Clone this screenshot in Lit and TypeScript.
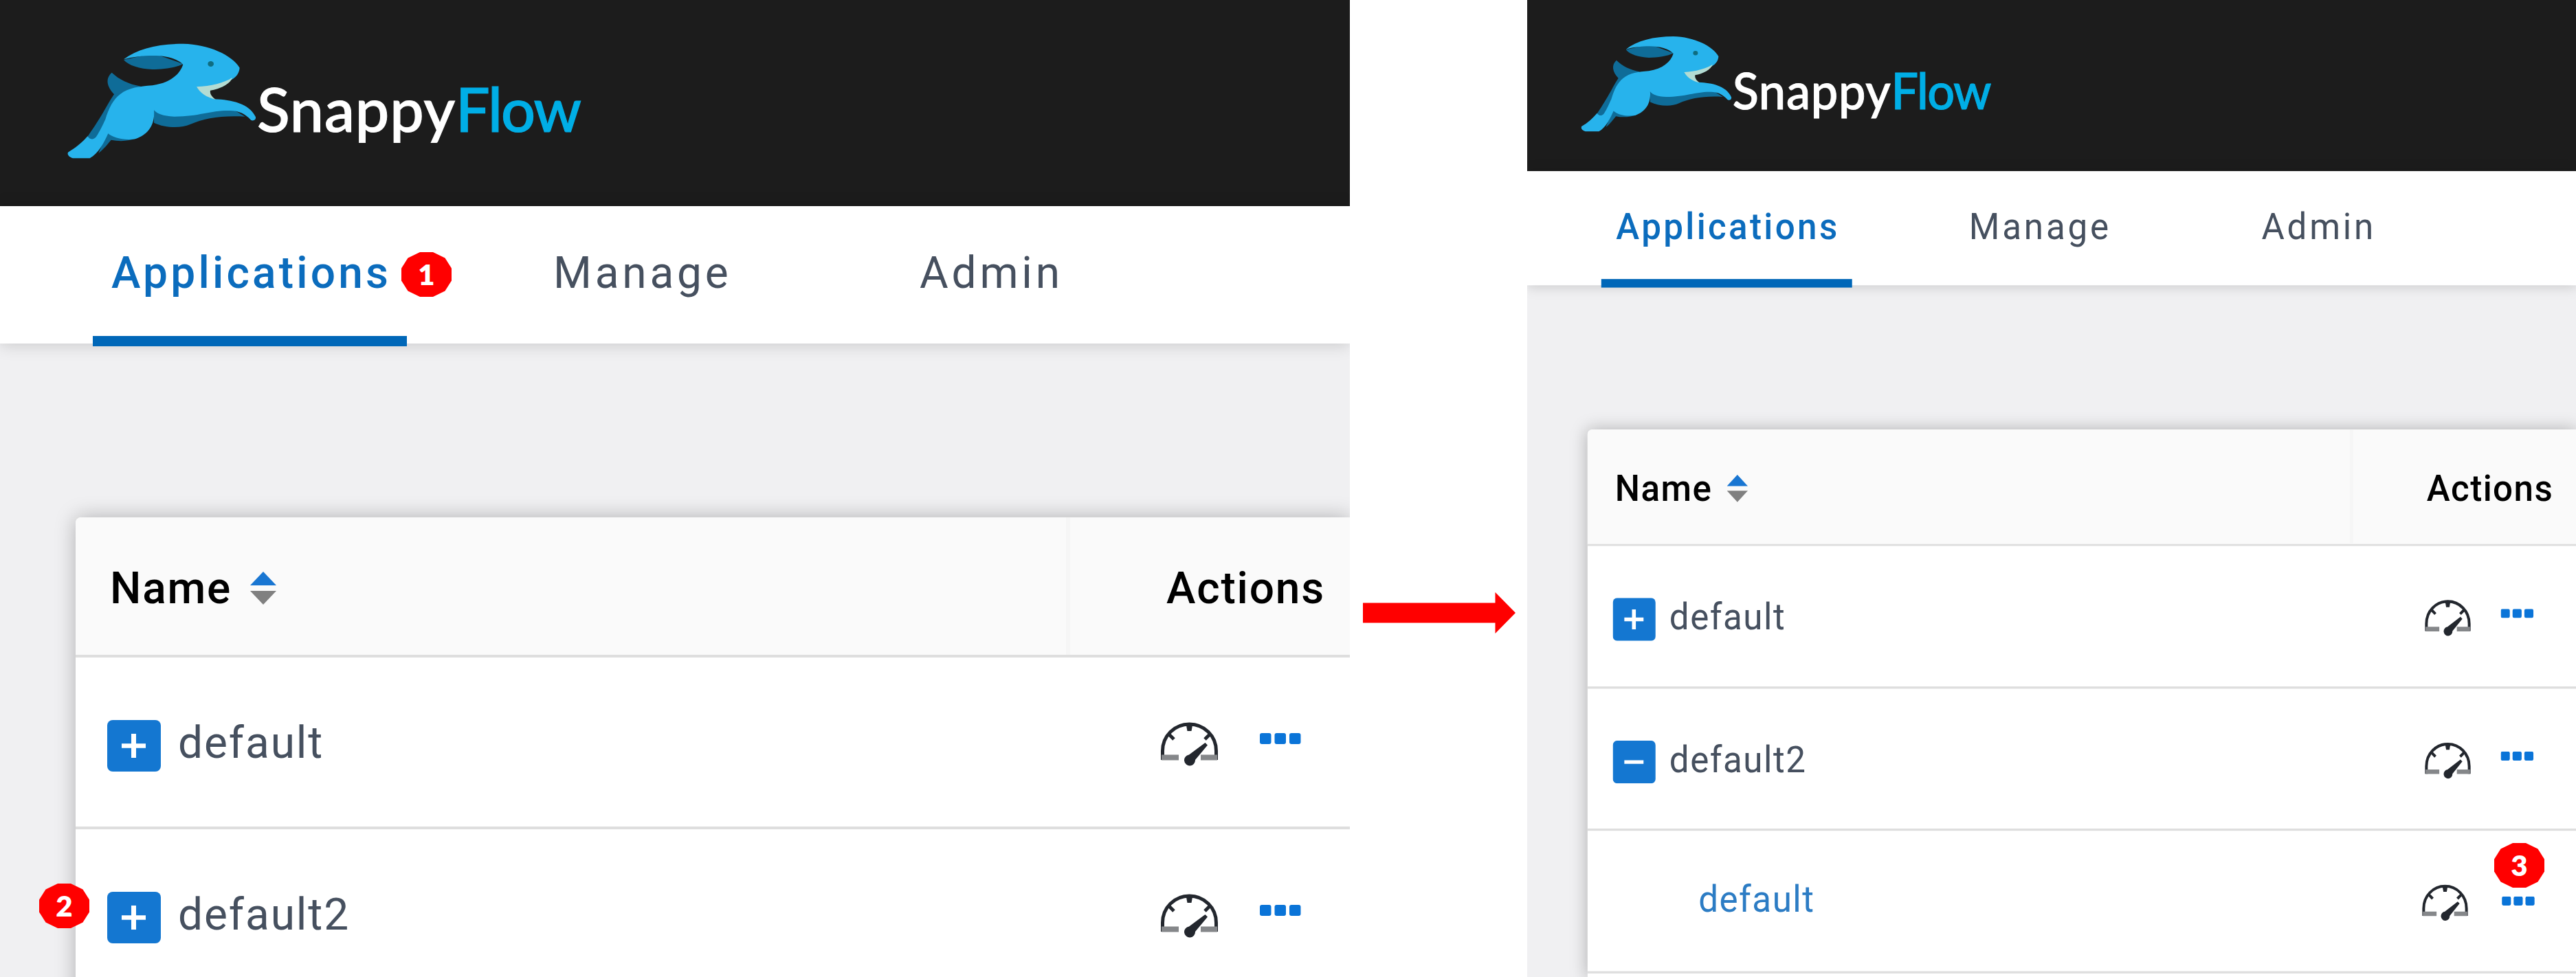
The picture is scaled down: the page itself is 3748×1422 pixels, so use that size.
import { LitElement, html, css, svg, nothing } from "lit";
import { customElement, property } from "lit/decorators.js";
import { classMap } from "lit/directives/class-map.js";

interface AppRow {
  name: string;
  state: "closed" | "open" | "child";
}

@customElement("brand-logo")
class BrandLogo extends LitElement {
  static styles = css`
    :host {
      display: flex;
      align-items: flex-start;
      font-family: Lato, "Liberation Sans", sans-serif;
    }
    .rabbit {
      display: block;
      width: 276px;
      height: 170px;
      margin: 62px 0 0 98px;
    }
    .word {
      margin: 103px 0 0 0;
      font-size: 88px;
      line-height: 110px;
      font-weight: 500;
      color: #fff;
      letter-spacing: 0.9px;
      white-space: nowrap;
      -webkit-text-stroke: 1.2px currentColor;
    }
    .flow {
      color: #00aee6;
      letter-spacing: -2px;
    }
  `;

  render() {
    return html`
      <svg class="rabbit" viewBox="24 35 828 510" preserveAspectRatio="none">
        <g fill="#0f6c98">
          <path d="M218 166C190 190 194 226 230 262L264 268L345 226C290 216 250 196 218 166Z" />
          <path d="M230 258C200 300 180 350 112 446L130 468L160 460L220 380L275 256Z" />
          <path d="M402 328V385C450 408 520 410 560 392C620 365 700 352 800 358L740 322L500 340Z" />
          <path d="M198 426L160 518C185 498 200 478 215 460C250 467 290 467 335 450Z" />
          <path d="M270 110L400 82L529 128C500 144 440 152 395 152C340 150 290 135 270 110Z" />
        </g>
        <path
          fill="#27b3ec"
          d="M270 108C330 62 420 40 530 40C640 42 745 90 776 145C774 168 762 184 742 196C700 222 640 228 590 230C605 250 635 268 668 282C740 285 818 300 846 360C848 372 838 378 826 374C800 345 770 332 735 332C650 330 600 358 490 358C440 356 415 345 402 330C408 400 370 440 320 456C270 462 225 452 202 432C185 470 160 520 122 540H48C32 535 22 525 27 514C60 495 90 470 112 444C124 462 140 458 150 446C168 418 178 395 190 370C205 320 225 282 255 260C290 232 340 226 395 222C470 212 515 175 529 131C505 105 455 92 400 92C350 92 305 98 270 108Z"
        />
        <path fill="#b3dcd3" d="M588 228C650 226 710 210 744 188C736 215 690 238 648 244C645 258 655 272 672 284C630 274 604 255 588 228Z" />
        <ellipse cx="650" cy="128" rx="13" ry="12" fill="#0f6d80" />
      </svg>
      <div class="word">Snappy<span class="flow">Flow</span></div>
    `;
  }
}

@customElement("app-panel")
class AppPanel extends LitElement {
  @property({ attribute: false }) rows: AppRow[] = [];
  @property({ type: Boolean, reflect: true }) compact = false;

  static styles = css`
    :host {
      display: block;
      width: 1964px;
      height: 1422px;
      overflow: hidden;
      --name-col: 1444px;
      --action-pad: 134px;
      font-family: Roboto, "Liberation Sans", sans-serif;
      font-size: 64px;
      line-height: 80px;
      color: #46505f;
    }
    :host([compact]) {
      width: 1526px;
      --name-col: 1392px;
      --action-pad: 128px;
    }
    .page {
      display: flex;
      flex-direction: column;
      width: 1964px;
      height: 1713px;
      background: #f0f0f2;
      overflow: hidden;
    }
    :host([compact]) .page {
      width: 1912px;
      transform: scale(0.7985, 0.8305);
      transform-origin: 0 0;
    }
    .top {
      flex: none;
      height: 300px;
      background: #1c1c1c;
    }
    .tabs {
      flex: none;
      display: flex;
      height: 200px;
      padding-left: 135px;
      background: #fff;
      box-shadow: 0 2px 22px rgba(0, 0, 0, 0.17);
    }
    .tab {
      box-sizing: border-box;
      height: 204px;
      padding-top: 58px;
      letter-spacing: 4.8px;
      white-space: nowrap;
    }
    .tab.first {
      width: 457px;
      margin-right: 213px;
      padding-left: 27px;
      border-bottom: 15px solid #0067b8;
      color: #0b6cbd;
      font-weight: 500;
      letter-spacing: 4.2px;
    }
    .tab.second {
      width: 533px;
    }
    .table {
      flex: 1;
      margin: 253px 0 0 110px;
      background: #fff;
      border-radius: 8px 0 0 0;
      box-shadow: 0 0 30px rgba(0, 0, 0, 0.27);
    }
    .head,
    .row {
      box-sizing: border-box;
      display: grid;
      grid-template-columns: var(--name-col) 1fr;
      border-bottom: 4px solid #dedede;
    }
    .head {
      height: 204px;
      background: #fafafa;
      border-radius: 8px 0 0 0;
      color: #000;
      font-weight: 500;
      letter-spacing: 1.8px;
    }
    .head .name {
      display: flex;
      padding: 64px 0 0 50px;
    }
    .sort {
      width: 38px;
      height: 50px;
      margin: 15px 0 0 27px;
    }
    .head .actions {
      padding-top: 64px;
      border-left: 6px solid #f6f6f6;
      margin-left: -3px;
      padding-left: calc(var(--action-pad) + 6px);
    }
    .row {
      height: 249.5px;
    }
    .row .name {
      display: flex;
      padding-left: 46px;
      letter-spacing: 1.9px;
    }
    .toggle {
      width: 78px;
      height: 75px;
      margin: 91px 25px 0 0;
    }
    .label {
      margin-top: 85px;
    }
    .child .label {
      margin: 81px 0 0 156px;
      color: #2c7cc4;
    }
    .row .actions {
      display: flex;
      padding-left: var(--action-pad);
    }
    .gauge {
      width: 85px;
      height: 64px;
      margin-top: 94px;
    }
    .more {
      width: 60px;
      height: 16px;
      margin: 110px 0 0 60px;
    }
    :host([compact]) .gauge {
      margin-left: 5px;
    }
    :host([compact]) .more {
      margin-left: 54px;
    }
    :host([compact]) .child .gauge {
      margin-left: 0;
    }
    :host([compact]) .child .more {
      margin: 115px 0 0 61px;
    }
  `;

  private toggle(open: boolean) {
    return html`<svg class="toggle" viewBox="0 0 78 75">
      <rect width="78" height="75" rx="8" fill="#1477d1" />
      <path d="M21 37.5H56" stroke="#fff" stroke-width="6.500" />
      ${open ? nothing : svg`<path d="M38.500 20V55" stroke="#fff" stroke-width="7" />`}
    </svg>`;
  }

  private renderRow(row: AppRow) {
    return html`<div class=${classMap({ row: true, child: row.state === "child" })}>
      <div class="name">
        ${row.state === "child" ? nothing : this.toggle(row.state === "open")}
        <span class="label">${row.name}</span>
      </div>
      <div class="actions">
        <svg class="gauge" viewBox="0 0 85 64" fill="none" stroke="#23272e">
          <path d="M3.500 55V42C3.500 20 21 3 42.500 3S81.500 20 81.500 42V55" stroke-width="5" />
          <path d="M2 51.500H27M59 51.500H83" stroke="#85878a" stroke-width="8" />
          <path d="M12 17L20 25M73 17L65 25" stroke-width="5" />
          <path d="M37.500 2H47.500L45.500 13H39.500Z" fill="#23272e" stroke="none" />
          <path d="M65.500 30L69 33.500L51 55A8 8 0 1 1 42 47.500Z" fill="#23272e" stroke="none" />
        </svg>
        <svg class="more" viewBox="0 0 60 16" fill="#0a74d8">
          <rect x="0" width="16.500" height="16" rx="3" />
          <rect x="21.500" width="16.500" height="16" rx="3" />
          <rect x="43" width="16.500" height="16" rx="3" />
        </svg>
      </div>
    </div>`;
  }

  render() {
    return html`<div class="page">
      <div class="top"><brand-logo></brand-logo></div>
      <div class="tabs">
        <div class="tab first">Applications</div>
        <div class="tab second">Manage</div>
        <div class="tab">Admin</div>
      </div>
      <div class="table">
        <div class="head">
          <div class="name">
            <span>Name</span>
            <svg class="sort" viewBox="0 0 38 50">
              <path d="M19 0L38 20H0Z" fill="#1976d2" />
              <path d="M0 28H38L19 48Z" fill="#808080" />
            </svg>
          </div>
          <div class="actions">Actions</div>
        </div>
        ${this.rows.map((r) => this.renderRow(r))}
      </div>
    </div>`;
  }
}

@customElement("app-root")
class AppRoot extends LitElement {
  static styles = css`
    :host {
      display: flex;
      position: relative;
      width: 3748px;
      height: 1422px;
      overflow: hidden;
      background: #fff;
    }
    .between {
      display: flex;
      align-items: flex-start;
      width: 258px;
    }
    .arrow {
      width: 222px;
      height: 60px;
      margin: 862px 0 0 19px;
    }
    .badge {
      position: absolute;
      display: flex;
      align-items: center;
      justify-content: center;
      width: 73px;
      height: 65px;
      background: #f00;
      clip-path: polygon(37% 0, 63% 0, 87% 13%, 100% 36%, 100% 64%, 87% 87%, 63% 100%, 37% 100%, 13% 87%, 0 64%, 0 36%, 13% 13%);
      color: #fff;
      font: 800 42px/65px Lato, "Liberation Sans", sans-serif;
    }
    .one {
      left: 584px;
      top: 367px;
    }
    .two {
      left: 57px;
      top: 1286px;
    }
    .three {
      left: 3629px;
      top: 1227px;
    }
  `;

  private before: AppRow[] = [
    { name: "default", state: "closed" },
    { name: "default2", state: "closed" },
  ];

  private after: AppRow[] = [
    { name: "default", state: "closed" },
    { name: "default2", state: "open" },
    { name: "default", state: "child" },
  ];

  render() {
    return html`
      <app-panel .rows=${this.before}></app-panel>
      <div class="between">
        <svg class="arrow" viewBox="0 0 222 60">
          <path d="M0 15.500H192.500V0L222 30L192.500 60V44.500H0Z" fill="#f00" />
        </svg>
      </div>
      <app-panel compact .rows=${this.after}></app-panel>
      <div class="badge one">1</div>
      <div class="badge two">2</div>
      <div class="badge three">3</div>
    `;
  }
}
